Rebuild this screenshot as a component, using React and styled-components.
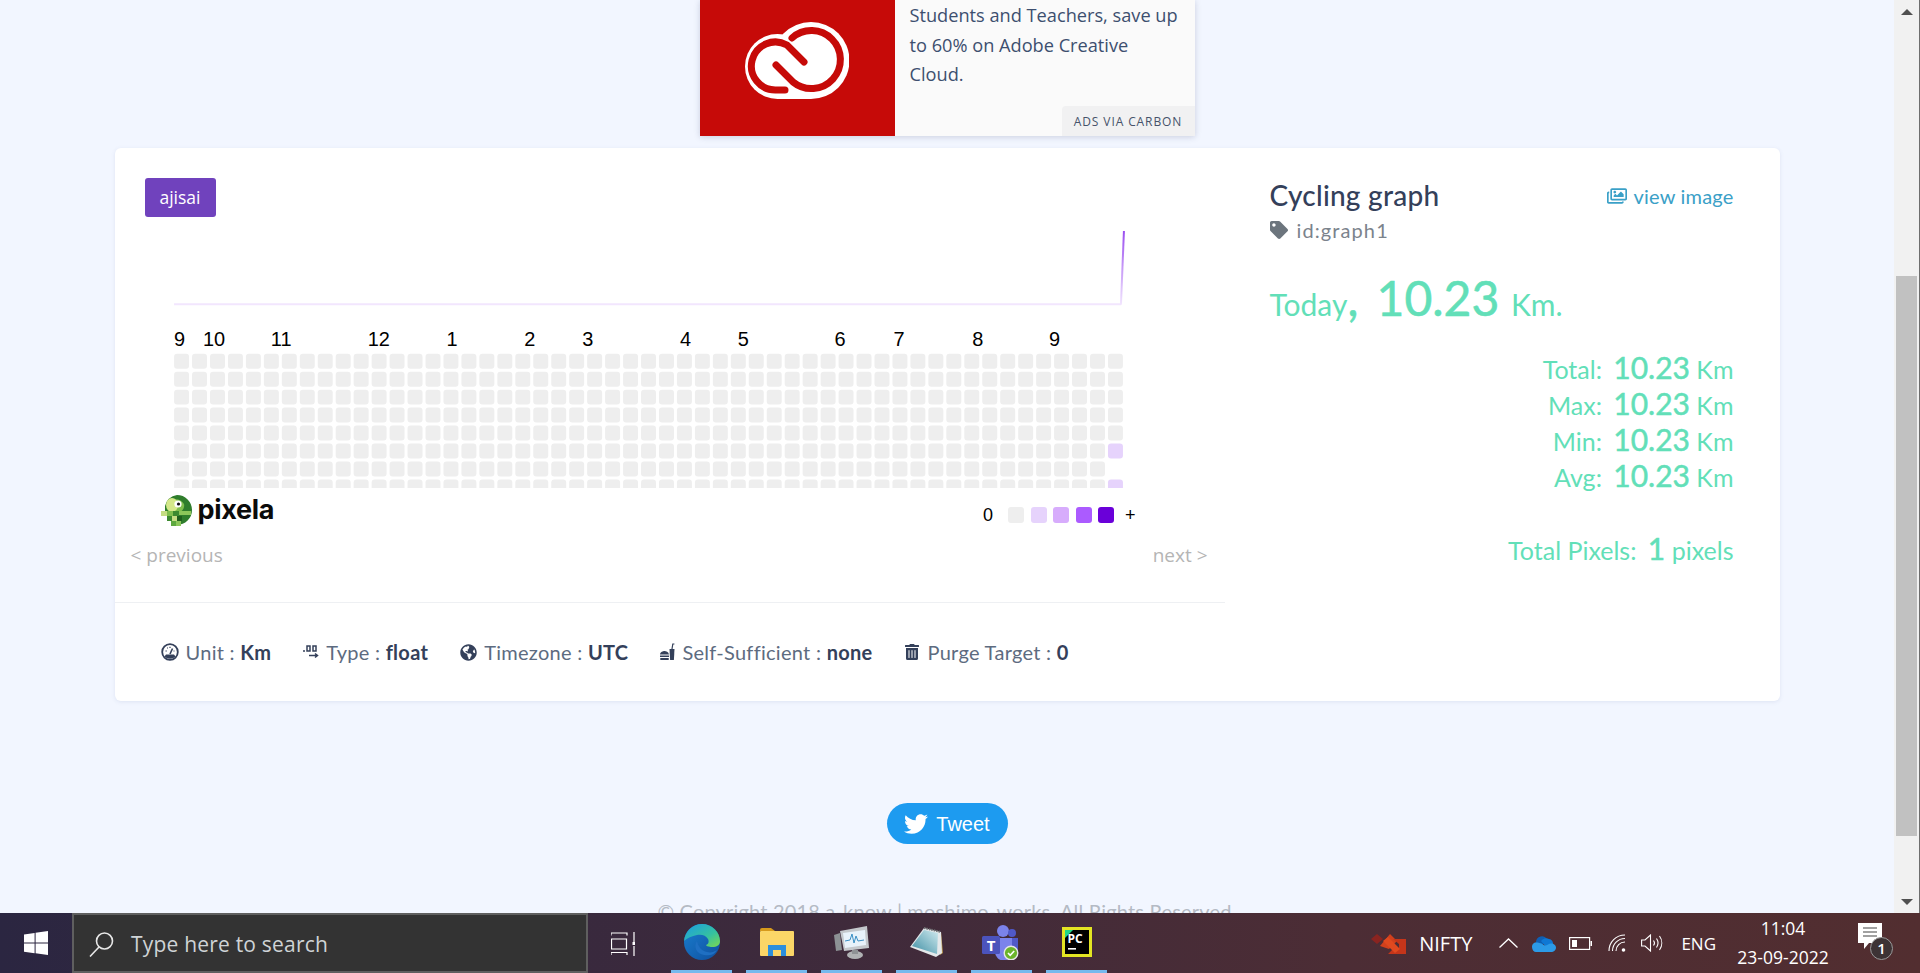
import React from 'react';
import styled, { createGlobalStyle } from 'styled-components';
import { FaTwitter, FaTag, FaRegImages, FaGlobeAmericas, FaTrashAlt } from 'react-icons/fa';

const maven = '"Lato", "Open Sans", sans-serif';
const segoe = '"Open Sans", "Noto Sans", sans-serif';

const Global = createGlobalStyle`
  html, body { margin: 0; padding: 0; height: 100%; overflow: hidden; background: #f2f6ff; }
  #root { height: 100%; }
`;

const Screen = styled.div`
  height: 973px;
  display: flex;
  flex-direction: column;
  overflow: hidden;
`;

const Viewport = styled.div`
  flex: 1;
  min-height: 0;
  display: flex;
`;

const Page = styled.div`
  flex: 1;
  min-width: 0;
  overflow: hidden;
  display: flex;
  flex-direction: column;
  align-items: center;
  background: #f2f6ff;
`;

const Ad = styled.div`
  width: 495px;
  height: 136px;
  flex: none;
  display: flex;
  background: #fafafa;
  box-shadow: 0 1px 6px rgba(60, 70, 110, 0.22);
`;

const AdImage = styled.div`
  width: 195px;
  background: #c60a08;
  display: flex;
  align-items: center;
  justify-content: center;
  padding-bottom: 15px;
  box-sizing: border-box;
`;

const AdBody = styled.div`
  position: relative;
  flex: 1;
  padding: 1px 12px 0 15px;
  font: 18.2px/29.5px ${segoe};
  color: #3d4f6f;
`;

const AdTag = styled.div`
  position: absolute;
  right: 0;
  bottom: 0;
  height: 30px;
  width: 133px;
  box-sizing: border-box;
  background: #f1f1f2;
  border-top-left-radius: 4px;
  text-align: center;
  font: 12px/31px ${segoe};
  letter-spacing: 0.9px;
  color: #46536a;
`;

const Card = styled.div`
  width: 1665px;
  height: 553px;
  flex: none;
  margin-top: 12px;
  display: flex;
  background: #fff;
  border-radius: 6px;
  box-shadow: 0 1px 4px rgba(80, 100, 160, 0.12);
`;

const LeftCol = styled.div`
  width: 1110px;
  flex: none;
  display: flex;
  flex-direction: column;
`;

const Badge = styled.div`
  align-self: flex-start;
  margin: 30px 0 0 30px;
  width: 71px;
  height: 39px;
  background: #7042bd;
  border-radius: 3px;
  color: #fff;
  text-align: center;
  font: 17.5px/38px ${segoe};
`;

const Chart = styled.svg`
  display: block;
  margin: 8px 0 0 46px;
  width: 980px;
  height: 264px;
`;

const LogoRow = styled.div`
  width: 980px;
  height: 40px;
  margin-left: 46px;
  display: flex;
  align-items: center;
  justify-content: space-between;
`;

const Logo = styled.div`
  display: flex;
  align-items: center;
  margin-top: 4px;
`;

const LogoWord = styled.span`
  margin-left: 5px;
  font: 700 27px/30px "Inter", sans-serif;
  letter-spacing: -0.3px;
  color: #0b0b0b;
`;

const Legend = styled.div`
  display: flex;
  align-items: center;
  gap: 6.5px;
  margin: 14px 5px 0 0;
  font: 18px/20px "Liberation Sans", sans-serif;
  color: #000;
`;

const LegendCell = styled.i`
  width: 16px;
  height: 16px;
  border-radius: 3px;
  background: ${(p) => p.$color};
`;

const LegendEnd = styled.span`
  margin: ${(p) => p.$margin};
`;

const Pager = styled.div`
  display: flex;
  justify-content: space-between;
  padding: 14px 17px 0 16px;
  font: 19px/26px ${segoe};
  color: #b5b5b5;
`;

const Meta = styled.div`
  margin-top: 34px;
  border-top: 1px solid #eef0f3;
  height: 98px;
  padding-left: 46px;
  display: flex;
  align-items: center;
  font: 20px/24px ${maven};
  letter-spacing: 0.28px;
  color: #5d6b80;
`;

const MetaItem = styled.div`
  display: flex;
  align-items: center;
  gap: 7px;
  margin-right: ${(p) => p.$gap}px;
  svg { color: #34405a; flex: none; }
`;

const MetaValue = styled.b`
  font-weight: 700;
  color: #34405a;
`;

const RightCol = styled.div`
  flex: 1;
  padding: 29px 46px 0 45px;
`;

const TitleRow = styled.div`
  display: flex;
  justify-content: space-between;
`;

const Title = styled.div`
  font: 500 28px/36px ${maven};
  letter-spacing: 0.25px;
  color: #34405a;
`;

const ViewImage = styled.div`
  display: flex;
  align-items: center;
  gap: 7px;
  height: 36px;
  margin-top: 1px;
  font: 20px/24px ${maven};
  letter-spacing: 0.2px;
  color: #3aa0c7;
`;

const GraphId = styled.div`
  display: flex;
  align-items: center;
  gap: 9px;
  margin-top: 2px;
  font: 20px/28px ${maven};
  letter-spacing: 1.1px;
  color: #7b838c;
  svg { color: #6c757d; }
`;

const Today = styled.div`
  margin-top: 30px;
  height: 54px;
  font: 30px/54px ${maven};
  color: #62dfb8;
`;

const TodayValue = styled.span`
  font-size: 48px;
  line-height: 1;
  -webkit-text-stroke: 0.6px #62dfb8;
  word-spacing: 6px;
`;

const TodayUnit = styled.span`
  margin-left: 4px;
`;

const Stats = styled.div`
  margin-top: 23px;
  text-align: right;
  color: #62dfb8;
`;

const StatRow = styled.div`
  height: 36px;
  font: 25px/36px ${maven};
`;

const StatValue = styled.span`
  font-size: 30px;
  line-height: 1;
  margin-left: 5px;
  -webkit-text-stroke: 0.5px #62dfb8;
`;

const TotalPixels = styled(StatRow)`
  margin-top: 37px;
`;

const TweetBtn = styled.div`
  margin-top: 102px;
  width: 121px;
  height: 41px;
  flex: none;
  border-radius: 21px;
  background: #1d9bf0;
  color: #fff;
  display: flex;
  align-items: center;
  justify-content: center;
  gap: 8px;
  font: 500 20px/24px "Liberation Sans", sans-serif;
`;

const Copyright = styled.div`
  margin-top: 55px;
  flex: none;
  font: 20px/24px ${maven};
  letter-spacing: 0.18px;
  color: #b4bac4;
  white-space: nowrap;
`;

const ScrollBar = styled.div`
  width: 25px;
  flex: none;
  display: flex;
  flex-direction: column;
  align-items: center;
  background: #f1f1f1;
  border-right: 1px solid #6e6e6e;
`;

const ScrollArrow = styled.i`
  width: 0;
  height: 0;
  margin: ${(p) => p.$margin};
  border-left: 6px solid transparent;
  border-right: 6px solid transparent;
  ${(p) => (p.$down ? 'border-top: 6px solid #505050;' : 'border-bottom: 6px solid #505050;')}
`;

const ScrollThumb = styled.div`
  width: 21px;
  height: 560px;
  margin-top: 261px;
  background: #c1c1c1;
`;

const Taskbar = styled.div`
  height: 60px;
  flex: none;
  display: flex;
  align-items: stretch;
  background: linear-gradient(90deg, #2b2641 0%, #3d2a3c 40%, #4c2d35 70%, #522e30 100%);
  color: #fff;
  font-family: ${segoe};
`;

const StartBtn = styled.div`
  width: 72px;
  flex: none;
  display: flex;
  align-items: center;
  justify-content: center;
`;

const SearchBox = styled.div`
  width: 516px;
  flex: none;
  box-sizing: border-box;
  display: flex;
  align-items: center;
  gap: 17px;
  padding: 2px 0 0 15px;
  background: #333;
  border: 2px solid #5f5f5f;
  font-size: 21px;
  letter-spacing: 0.2px;
  color: #cfd3d6;
`;

const TaskView = styled.div`
  width: 76px;
  flex: none;
  display: flex;
  align-items: center;
  padding: 1px 0 0 23px;
  box-sizing: border-box;
`;

const AppBtn = styled.div`
  position: relative;
  width: 75px;
  flex: none;
  display: flex;
  align-items: center;
  justify-content: center;
  padding-bottom: 2px;
  box-sizing: border-box;
  &::after {
    content: '';
    position: absolute;
    left: 7px;
    right: 7px;
    bottom: 0;
    height: 3px;
    background: #76b9ed;
  }
`;

const Tray = styled.div`
  margin-left: auto;
  padding-right: 38px;
  display: flex;
  align-items: center;
`;

const TrayItem = styled.div`
  margin-left: ${(p) => p.$gap}px;
  display: flex;
  align-items: center;
  font-size: ${(p) => p.$size || 17}px;
`;

const Clock = styled.div`
  margin-left: 20px;
  width: 94px;
  text-align: center;
  font-size: 17.5px;
  line-height: 29px;
`;

const Notify = styled.div`
  position: relative;
  margin-left: 28px;
  width: 24px;
  height: 40px;
`;

const NotifyBadge = styled.div`
  position: absolute;
  left: 12px;
  top: 14px;
  width: 23px;
  height: 23px;
  box-sizing: border-box;
  border-radius: 50%;
  background: #3d3335;
  border: 1px solid #9a9a9a;
  text-align: center;
  font: 600 15px/21px ${segoe};
`;

const labels = [
  [12, '9'], [41, '10'], [109, '11'], [206, '12'], [285, '1'], [363, '2'], [421, '3'],
  [519, '4'], [577, '5'], [674, '6'], [733, '7'], [812, '8'], [889, '9'],
];

const isCellHidden = (col, row) => col === 52 && row === 6;
const cellColor = (col, row) => (col === 52 && (row === 5 || row === 7) ? '#e6d3fc' : '#eeeeee');

const cols = Array.from({ length: 53 }, (_, i) => i);
const rows = Array.from({ length: 8 }, (_, i) => i);

const legendColors = ['#eeeeee', '#e6d3fc', '#d7acfc', '#ab5bff', '#6a00d9'];

const stats = ['Total', 'Max', 'Min', 'Avg'];

function CloudLogo() {
  return (
    <svg width="104" height="77" viewBox="0 0 104 77">
      <g fill="#fff">
        <circle cx="66" cy="38.5" r="38.5" />
        <circle cx="32.5" cy="44.5" r="32.5" />
        <rect x="32" y="30" width="34" height="47" />
      </g>
      <g fill="none" stroke="#c60a08" strokeWidth="7" strokeLinecap="round">
        <path d="M47 16A29 29 0 1 1 48 60L31 43" />
        <path d="M59 40L42 23A24 24 0 1 0 31 68L40 68" />
      </g>
    </svg>
  );
}

function PixelaBird() {
  return (
    <svg width="32" height="32" viewBox="0 0 32 32">
      <path d="M16 1a15 15 0 0 1 0 30H12V19H4V12A15 15 0 0 1 16 1Z" fill="#2f7d2c" />
      <path d="M6 10a10 10 0 0 1 17 0c1 5-3 9-8 9H8Z" fill="#7fbe4d" />
      <ellipse cx="11" cy="11" rx="6" ry="7" fill="#d4e889" />
      <circle cx="17" cy="10" r="3.6" fill="#fff" />
      <circle cx="17.5" cy="10" r="1.6" fill="#111" />
      <rect x="0" y="17" width="6" height="5" fill="#c5dd83" />
      <rect x="6" y="17" width="6" height="5" fill="#7fbe4d" />
      <rect x="12" y="17" width="6" height="5" fill="#3c8a30" />
      <rect x="18" y="17" width="12" height="4" fill="#8cc65a" />
      <rect x="6" y="22" width="5" height="5" fill="#3c8a30" />
      <rect x="11" y="22" width="5" height="5" fill="#c5dd83" />
      <rect x="16" y="22" width="5" height="5" fill="#1f5e1d" />
      <rect x="10" y="27" width="5" height="5" fill="#5ea93f" />
      <rect x="15" y="27" width="5" height="5" fill="#8cc65a" />
    </svg>
  );
}

function GaugeIcon() {
  return (
    <svg width="18" height="18" viewBox="0 0 18 18">
      <circle cx="9" cy="9" r="7.8" fill="none" stroke="currentColor" strokeWidth="1.8" />
      <path d="M3.5 13.5A7.6 7.6 0 0 0 14.5 13.5L13 11.5H5Z" fill="currentColor" />
      <path d="M9 11L11.5 5.5" stroke="currentColor" strokeWidth="1.6" />
      <path d="M4.5 8h1.3M6 5h1M9 3.8v1.2M12.5 8h1" stroke="currentColor" strokeWidth="1.2" />
    </svg>
  );
}

function DecimalIcon() {
  return (
    <svg width="16" height="18" viewBox="0 0 16 18">
      <circle cx="1" cy="8" r="1" fill="currentColor" />
      <path d="M4 3h3v5H4ZM10 3h3v5h-3Z" fill="none" stroke="currentColor" strokeWidth="1.5" />
      <path d="M6 12.5h8M12 10.5l2.5 2-2.5 2" fill="none" stroke="currentColor" strokeWidth="1.5" />
    </svg>
  );
}

function FoodIcon() {
  return (
    <svg width="15" height="18" viewBox="0 0 15 18">
      <path d="M9.5 6h5l-.6 11H10.1Z" fill="currentColor" />
      <path d="M12 6l.8-5h1.6" fill="none" stroke="currentColor" strokeWidth="1.2" />
      <path d="M0 11.5C.3 8.8 3 8 4.5 8S8.6 8.8 9 11.5ZM0 12.6h9v1.3H0ZM.3 15h8.4v2H.3Z" fill="currentColor" />
    </svg>
  );
}

function WinLogo() {
  return (
    <svg width="24" height="24" viewBox="0 0 24 24" fill="#fff">
      <path d="M0 3.4l10.6-1.5v9.6H0ZM11.6 1.7L24 0v11.5H11.6ZM0 12.5h10.6v9.7L0 20.7ZM11.6 12.5H24V24l-12.4-1.7Z" />
    </svg>
  );
}

function SearchGlyph() {
  return (
    <svg width="25" height="25" viewBox="0 0 25 25" fill="none" stroke="#e8e8e8" strokeWidth="1.6">
      <circle cx="15.5" cy="9" r="8" />
      <path d="M10 15L1 24.5" />
    </svg>
  );
}

function TaskViewGlyph() {
  return (
    <svg width="24" height="24" viewBox="0 0 24 24" fill="none" stroke="#fff" strokeWidth="1.2">
      <path d="M0 3.5V1h16v2.5M.5 7h15v10H.5ZM0 23v-2.5h16V23M23 0v10M23 14v10" />
      <rect x="21.5" y="10" width="3" height="3" fill="#fff" stroke="none" />
    </svg>
  );
}

function EdgeIcon() {
  return (
    <svg width="36" height="36" viewBox="0 0 36 36">
      <defs>
        <linearGradient id="edgeTop" x1="0" y1="0" x2="1" y2="1">
          <stop offset="0" stopColor="#1b9de2" />
          <stop offset="0.6" stopColor="#35c1a0" />
          <stop offset="1" stopColor="#7dd84f" />
        </linearGradient>
        <linearGradient id="edgeLow" x1="0" y1="0" x2="1" y2="1">
          <stop offset="0" stopColor="#1a7fd0" />
          <stop offset="1" stopColor="#0f4f9e" />
        </linearGradient>
      </defs>
      <circle cx="18" cy="18" r="18" fill="url(#edgeLow)" />
      <path d="M0 17C1 7 9 0 18 0c10 0 18 8 18 17 0 4-3 6-8 6-3 0-6-1-6-2 3-1 3-4 2-6-2-4-7-5-11-4C8 12 3 14 0 17Z" fill="url(#edgeTop)" />
      <path d="M13 17c-4 6 0 13 7 14 5 1 10 0 13-5-3 2-6 3-10 2-5-1-9-5-10-11Z" fill="#1f6fc2" />
    </svg>
  );
}

function FolderIcon() {
  return (
    <svg width="34" height="28" viewBox="0 0 34 28">
      <path d="M0 2a2 2 0 0 1 2-2h9l4 3h-15Z" fill="#d69a1c" />
      <rect x="0" y="3" width="34" height="25" rx="1" fill="#fbd667" />
      <path d="M8 28V17h18v11h-5v-6h-8v6Z" fill="#2c8fdc" />
      <rect x="13" y="22" width="8" height="6" fill="#fbd667" />
    </svg>
  );
}

function MonitorIcon() {
  return (
    <svg width="35" height="33" viewBox="0 0 35 33">
      <path d="M6 5L33 0l2 22-25 3Z" fill="#c4c8cc" />
      <path d="M9 7l22-3 1 15-21 3Z" fill="#e8f2fa" />
      <path d="M11 15l5-1 2-6 2 9 2-7 2 5 6-1" fill="none" stroke="#3a8fc4" strokeWidth="1" />
      <path d="M0 9l6-2 2 17-6 1Z" fill="#8c9194" />
      <ellipse cx="21" cy="29" rx="8" ry="4" fill="#b0b2b4" />
      <rect x="18" y="24" width="6" height="4" fill="#8f9295" />
    </svg>
  );
}

function NotepadIcon() {
  return (
    <svg width="33" height="31" viewBox="0 0 33 31">
      <defs>
        <linearGradient id="padPage" x1="0" y1="1" x2="1" y2="0">
          <stop offset="0" stopColor="#3d8ea3" />
          <stop offset="1" stopColor="#cfe9ee" />
        </linearGradient>
      </defs>
      <path d="M31 5l2 21-3 2Z" fill="#b8954c" />
      <path d="M14 1L31 5l1 21-6 4L0 20Z" fill="#e4e8ea" />
      <path d="M14 3L28 6l-1 21L2 19Z" fill="url(#padPage)" />
      <path d="M14 1L31 5" stroke="#6e7072" strokeWidth="2" strokeDasharray="1.5 1" />
    </svg>
  );
}

function TeamsIcon() {
  return (
    <svg width="39" height="35" viewBox="0 0 39 35">
      <circle cx="21" cy="6" r="6" fill="#7b83eb" />
      <circle cx="30" cy="8" r="4" fill="#5059c9" />
      <path d="M26 13h10v12c0 3-4 5-7 3Z" fill="#5059c9" />
      <path d="M13 13h17v14a8 8 0 0 1-17 0Z" fill="#7b83eb" />
      <rect x="0" y="11" width="18" height="18" rx="1.5" fill="#4b53bc" />
      <text x="9" y="25.5" textAnchor="middle" fontSize="15" fontWeight="700" fontFamily="Open Sans" fill="#fff">T</text>
      <circle cx="29" cy="28" r="6.8" fill="#6bb42b" stroke="#e6e6e6" strokeWidth="1.4" />
      <path d="M26 28l2.2 2.4 4-4.4" fill="none" stroke="#fff" strokeWidth="1.6" />
    </svg>
  );
}

function PycharmIcon() {
  return (
    <svg width="30" height="30" viewBox="0 0 30 30">
      <rect width="30" height="30" fill="#e3e523" />
      <rect x="3" y="3" width="24" height="24" fill="#000" />
      <path d="M3 3h8L3 11Z" fill="#21d789" />
      <text x="5.5" y="16" fontSize="12" fontWeight="700" fontFamily="Open Sans" fill="#fff">PC</text>
      <rect x="6" y="21" width="8" height="1.6" fill="#fff" />
    </svg>
  );
}

function NiftyIcon() {
  return (
    <svg width="35" height="22" viewBox="0 0 35 22">
      <path d="M0 7l6-5 6 5-6 5Z" fill="#8a2420" />
      <path d="M9 14L19 2l7 7-8 8Z" fill="#d2401c" />
      <path d="M22 7h13v15H17l5-5h6V12Z" fill="#c4351a" />
      <path d="M17 5l12 12-5 4L12 9Z" fill="#e0491f" />
    </svg>
  );
}

function OneDrive() {
  return (
    <svg width="24" height="17" viewBox="0 0 24 17">
      <path d="M4 7a6 6 0 0 1 11-3l-6 8H3Z" fill="#0f5fb3" />
      <path d="M9 6a6 6 0 0 1 8-2 5 5 0 0 1 4 5l-7 3Z" fill="#0f78d4" />
      <path d="M4 7.5C1 7.5 0 10 0 12c0 3 2 5 4 5h15c3 0 5-2 5-4.5S21 8 19 8.5c-3 0-5 4-8 1C9 8 6 7.5 4 7.5Z" fill="#2c9ae6" />
    </svg>
  );
}

function Battery() {
  return (
    <svg width="23" height="13" viewBox="0 0 23 13" fill="none" stroke="#fff" strokeWidth="1.2">
      <rect x="0.6" y="0.6" width="20" height="11.8" />
      <rect x="3" y="3" width="5" height="7" fill="#fff" stroke="none" />
      <rect x="21.5" y="4" width="1.5" height="5" fill="#fff" stroke="none" />
    </svg>
  );
}

function Wifi() {
  return (
    <svg width="18" height="18" viewBox="0 0 18 18" fill="none" stroke="#fff" strokeWidth="1.1">
      <path d="M1 17C1 8 8 1 17 1M4.5 17C4.5 10 10 4.5 17 4.5M8 17c0-5 4-9 9-9" />
      <circle cx="15.5" cy="16" r="1.8" fill="#fff" stroke="none" />
    </svg>
  );
}

function Speaker() {
  return (
    <svg width="23" height="18" viewBox="0 0 23 18" fill="none" stroke="#fff" strokeWidth="1.1">
      <path d="M.6 6h3.4L9.5 1v16L4 12H.6Z" />
      <path d="M12.5 6.5a4 4 0 0 1 0 5M15.5 4.5a8 8 0 0 1 0 9M18.5 2a12 12 0 0 1 0 14" />
    </svg>
  );
}

function Bubble() {
  return (
    <svg width="24" height="27" viewBox="0 0 24 27">
      <path d="M0 0h24v20H11l-5 6v-6H0Z" fill="#fff" />
      <path d="M5 5h14M5 9h14M5 13h14" stroke="#444" strokeWidth="1.2" />
    </svg>
  );
}

export default function App() {
  return (
    <>
      <Global />
      <Screen>
        <Viewport>
          <Page>
            <Ad>
              <AdImage><CloudLogo /></AdImage>
              <AdBody>
                Students and Teachers, save up to 60% on Adobe Creative Cloud.
                <AdTag>ADS VIA CARBON</AdTag>
              </AdBody>
            </Ad>
            <Card>
              <LeftCol>
                <Badge>ajisai</Badge>
                <Chart viewBox="0 0 980 264">
                  <defs>
                    <linearGradient id="spike" x1="0" y1="1" x2="0" y2="0">
                      <stop offset="0" stopColor="#f2e6fe" />
                      <stop offset="1" stopColor="#9a4df0" />
                    </linearGradient>
                  </defs>
                  <path d="M12 79.5H961" stroke="#f2e6fe" strokeWidth="2" fill="none" />
                  <path d="M961 80L964 6" stroke="url(#spike)" strokeWidth="2" fill="none" />
                  {labels.map(([x, text], i) => (
                    <text key={i} x={x} y="121" fontSize="20" fontFamily="Liberation Sans" fill="#000">{text}</text>
                  ))}
                  {cols.map((col) =>
                    rows.map((row) =>
                      isCellHidden(col, row) ? null : (
                        <rect
                          key={`${col}-${row}`}
                          x={12 + col * 18}
                          y={129 + row * 18}
                          width="15"
                          height="15"
                          rx="3"
                          fill={cellColor(col, row)}
                        />
                      )
                    )
                  )}
                </Chart>
                <LogoRow>
                  <Logo>
                    <PixelaBird />
                    <LogoWord>pixela</LogoWord>
                  </Logo>
                  <Legend>
                    <LegendEnd $margin="0 9px 0 0">0</LegendEnd>
                    {legendColors.map((c) => <LegendCell key={c} $color={c} />)}
                    <LegendEnd $margin="0 0 0 4px">+</LegendEnd>
                  </Legend>
                </LogoRow>
                <Pager>
                  <span>&lt; previous</span>
                  <span>next &gt;</span>
                </Pager>
                <Meta>
                  <MetaItem $gap={32}><GaugeIcon /><span>Unit : <MetaValue>Km</MetaValue></span></MetaItem>
                  <MetaItem $gap={32}><DecimalIcon /><span>Type : <MetaValue>float</MetaValue></span></MetaItem>
                  <MetaItem $gap={32}><FaGlobeAmericas size={17} /><span>Timezone : <MetaValue>UTC</MetaValue></span></MetaItem>
                  <MetaItem $gap={32}><FoodIcon /><span>Self-Sufficient : <MetaValue>none</MetaValue></span></MetaItem>
                  <MetaItem $gap={0}><FaTrashAlt size={16} /><span>Purge Target : <MetaValue>0</MetaValue></span></MetaItem>
                </Meta>
              </LeftCol>
              <RightCol>
                <TitleRow>
                  <Title>Cycling graph</Title>
                  <ViewImage><FaRegImages size={20} />view image</ViewImage>
                </TitleRow>
                <GraphId><FaTag size={18} />id:graph1</GraphId>
                <Today>Today<TodayValue>, 10.23</TodayValue> <TodayUnit>Km.</TodayUnit></Today>
                <Stats>
                  {stats.map((s) => (
                    <StatRow key={s}>{s}: <StatValue>10.23</StatValue> Km</StatRow>
                  ))}
                  <TotalPixels>Total Pixels: <StatValue>1</StatValue> pixels</TotalPixels>
                </Stats>
              </RightCol>
            </Card>
            <TweetBtn><FaTwitter size={24} />Tweet</TweetBtn>
            <Copyright>© Copyright 2018 a-know | moshimo-works. All Rights Reserved.</Copyright>
          </Page>
          <ScrollBar>
            <ScrollArrow $margin="9px 0 0" />
            <ScrollThumb />
            <ScrollArrow $down $margin="auto 0 8px" />
          </ScrollBar>
        </Viewport>
        <Taskbar>
          <StartBtn><WinLogo /></StartBtn>
          <SearchBox><SearchGlyph />Type here to search</SearchBox>
          <TaskView><TaskViewGlyph /></TaskView>
          <AppBtn><EdgeIcon /></AppBtn>
          <AppBtn><FolderIcon /></AppBtn>
          <AppBtn><MonitorIcon /></AppBtn>
          <AppBtn><NotepadIcon /></AppBtn>
          <AppBtn><TeamsIcon /></AppBtn>
          <AppBtn><PycharmIcon /></AppBtn>
          <Tray>
            <TrayItem $gap={0}><NiftyIcon /></TrayItem>
            <TrayItem $gap={13} $size={20}>NIFTY</TrayItem>
            <TrayItem $gap={27}>
              <svg width="19" height="10" viewBox="0 0 19 10" fill="none" stroke="#fff" strokeWidth="1.3"><path d="M.5 9.5L9.5 1l9 8.5" /></svg>
            </TrayItem>
            <TrayItem $gap={14}><OneDrive /></TrayItem>
            <TrayItem $gap={13}><Battery /></TrayItem>
            <TrayItem $gap={16}><Wifi /></TrayItem>
            <TrayItem $gap={15}><Speaker /></TrayItem>
            <TrayItem $gap={17}>ENG</TrayItem>
            <Clock>11:04<br />23-09-2022</Clock>
            <Notify>
              <Bubble />
              <NotifyBadge>1</NotifyBadge>
            </Notify>
          </Tray>
        </Taskbar>
      </Screen>
    </>
  );
}
